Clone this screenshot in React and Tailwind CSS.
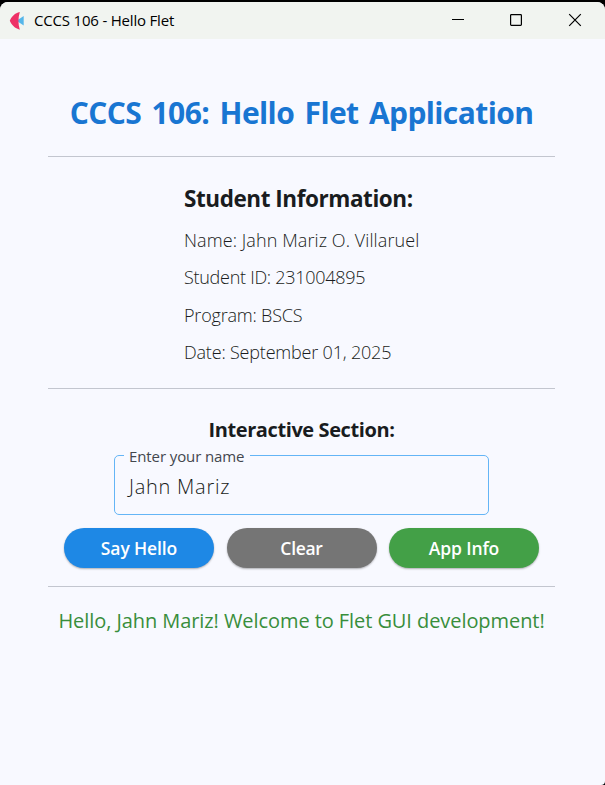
function Divider() {
  return <div className="h-px w-[507px] shrink-0 bg-[#c3c6cf] shadow-[0_0_0.5px_#c3c6cf]" />;
}

function TitleBar() {
  return (
    <header className="flex h-[37px] shrink-0 items-center bg-[#f1f4f0] pl-[9px] text-black">
      <svg width="16" height="20" viewBox="0 0 16 20" className="shrink-0">
        <path d="M7.500 9.800 14.700 5v9.600z" fill="#55b6ea" />
        <path d="M.8 9.800C2.500 5.500 6 2 10.800 1c-1.800 6-1.800 12 0 17.700C6 17.500 2.500 14 .8 9.800z" fill="#ee3167" />
      </svg>
      <h1 className="mb-[2px] ml-[9px] h-5 whitespace-nowrap text-[15px] leading-5 tracking-[-0.19px]">CCCS 106 - Hello Flet</h1>
      <svg className="mr-[22px] ml-auto" width="132" height="37" viewBox="0 0 132 37" fill="none" stroke="#000" strokeWidth="1.2">
        <path d="M1 17.500h12" />
        <rect x="59.600" y="12.600" width="10.800" height="10.800" rx="0.800" />
        <path d="m118.200 12.200 11.600 11.600m0-11.600-11.600 11.600" />
      </svg>
    </header>
  );
}

function Button({ className, children }) {
  return (
    <button className={"flex h-10 w-[150px] items-center justify-center rounded-full pt-px text-[17.5px] font-semibold whitespace-nowrap text-white shadow-[0_1px_2px_rgba(0,0,0,0.3)] " + className}>
      {children}
    </button>
  );
}

export default function App() {
  return (
    <div className="h-[785px] w-[605px] overflow-hidden bg-black pt-[2px] font-['Open_Sans','Noto_Sans',sans-serif]">
      <div className="flex h-[783px] flex-col overflow-hidden rounded-t-[8px] rounded-br-[4px] bg-[#f8f9ff]">
        <TitleBar />
        <main className="flex flex-col items-center pr-[2px] whitespace-nowrap text-[#191c20]">
          <h2 className="mt-[53px] mb-[22px] text-[30px] leading-[42px] font-bold tracking-[-0.6px] text-[#1976d2] [word-spacing:3.2px]">CCCS 106: Hello Flet Application</h2>
          <Divider />
          <section className="h-[231px] w-[235px] pt-[26px] text-[18px] leading-[37.4px] font-light">
            <h3 className="mb-[7px] text-[22.5px] leading-[32px] font-bold tracking-[-0.44px]">Student Information:</h3>
            <p className="tracking-[0.09px]">Name: Jahn Mariz O. Villaruel</p>
            <p className="tracking-[-0.28px]">Student ID: 231004895</p>
            <p className="tracking-[-0.2px]">Program: BSCS</p>
            <p className="tracking-[-0.19px]">Date: September 01, 2025</p>
          </section>
          <Divider />
          <h3 className="mt-[25px] text-[20px] leading-[32px] font-bold tracking-[-0.4px]">Interactive Section:</h3>
          <div className="relative mt-[9px] flex h-[60px] w-[375px] items-center rounded-[5px] border-[1.25px] border-[#64b5f6] pl-[14px]">
            <label className="absolute -top-[11px] left-[9px] w-[126px] bg-[#f8f9ff] pl-[5px] text-[15px] leading-[22px] tracking-[-0.1px] text-[#43474e]">Enter your name</label>
            <span className="pt-[3px] text-[20px] leading-7 font-light tracking-[0.75px]">Jahn Mariz</span>
          </div>
          <div className="mt-[13px] mb-[18px] flex gap-[12.5px]">
            <Button className="bg-[#1e88e5] tracking-[-0.12px]">Say Hello</Button>
            <Button className="bg-[#757575] tracking-[-0.3px]">Clear</Button>
            <Button className="bg-[#43a047] tracking-[-0.14px]">App Info</Button>
          </div>
          <Divider />
          <p className="mt-[18px] text-[20px] leading-8 tracking-[-0.07px] text-[#388e3c]">Hello, Jahn Mariz! Welcome to Flet GUI development!</p>
        </main>
      </div>
    </div>
  );
}
